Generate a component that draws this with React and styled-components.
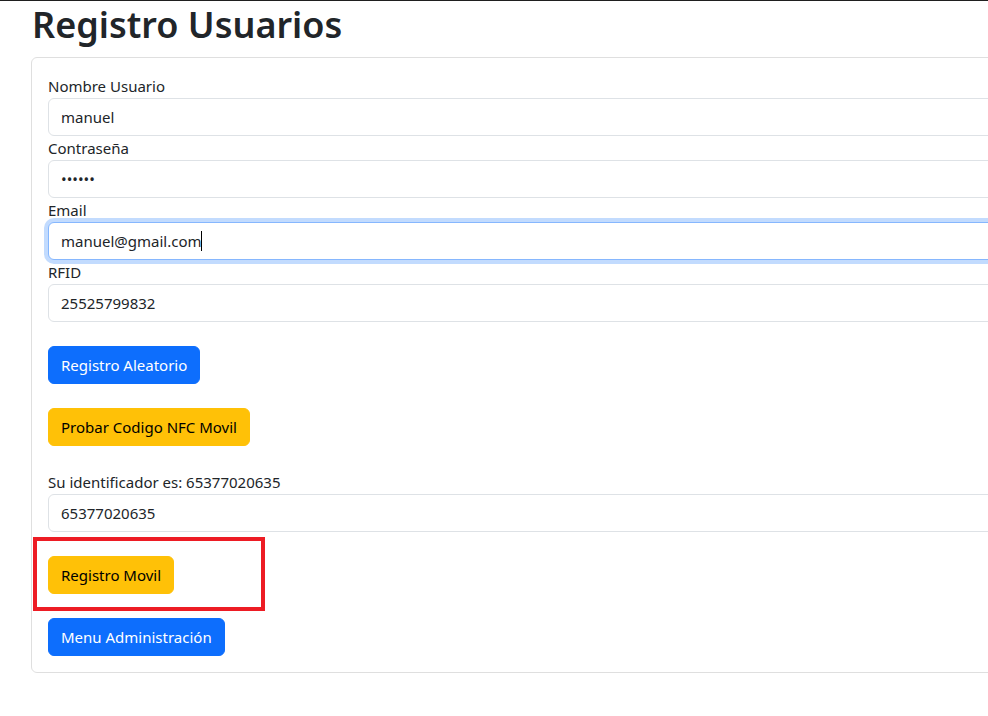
import React from 'react'
import styled, { createGlobalStyle } from 'styled-components'

const GlobalStyle = createGlobalStyle`
  html, body {
    margin: 0;
    padding: 0;
    background: #fff;
    overflow: hidden;
  }
  body {
    border-top: 1px solid #1f1f1f;
    font-family: "Noto Sans", "Open Sans", sans-serif;
    color: #212529;
    font-size: 15px;
    line-height: 24px;
  }
`

const Page = styled.div`
  padding-left: 31px;
  width: 1120px;
`

const Title = styled.h1`
  margin: 0 0 8px 1px;
  font-size: 36px;
  font-weight: 600;
  line-height: 48px;
  color: #212529;
`

const Card = styled.div`
  position: relative;
  border: 1px solid #dfdfdf;
  border-radius: 6px;
  padding: 16px;
  display: flex;
  flex-direction: column;
  align-items: flex-start;
`

const Label = styled.label`
  display: block;
  line-height: 24px;
`

const FieldWrap = styled.div`
  position: relative;
  width: 100%;
`

const Input = styled.input`
  display: block;
  box-sizing: border-box;
  width: 100%;
  height: 38px;
  padding: 6px 12px;
  font-family: inherit;
  font-size: 15px;
  line-height: 24px;
  color: #212529;
  background: #fff;
  border: 1px solid ${p => (p.$focus ? '#86b7fe' : '#dee2e6')};
  border-radius: 6px;
  outline: none;
  box-shadow: ${p => (p.$focus ? '0 0 0 4px rgba(13, 110, 253, 0.25)' : 'none')};
  position: relative;
  z-index: ${p => (p.$focus ? 1 : 0)};
`

const Caret = styled.span`
  position: absolute;
  left: 153px;
  top: 9px;
  width: 1px;
  height: 20px;
  background: #000;
  z-index: 2;
`

const Button = styled.button`
  margin-top: 24px;
  height: 38px;
  padding: 6px 12px;
  font-family: inherit;
  font-size: 15px;
  line-height: 24px;
  border: 1px solid ${p => (p.$variant === 'warning' ? '#ffc107' : '#0d6efd')};
  border-radius: 6px;
  background: ${p => (p.$variant === 'warning' ? '#ffc107' : '#0d6efd')};
  color: ${p => (p.$variant === 'warning' ? '#000' : '#fff')};
  cursor: pointer;
`

const Spacer = styled.div`
  height: 24px;
`

const Highlight = styled.div`
  position: absolute;
  left: 1px;
  top: 479px;
  width: 224px;
  height: 66px;
  border: 4px solid #ed1c24;
  pointer-events: none;
`

const Field = ({ label, value, type = 'text', focus }) => (
  <>
    <Label>{label}</Label>
    <FieldWrap>
      <Input type={type} defaultValue={value} $focus={focus} readOnly />
      {focus && <Caret />}
    </FieldWrap>
  </>
)

export default function App() {
  return (
    <>
      <GlobalStyle />
      <Page>
        <Title>Registro Usuarios</Title>
        <Card>
          <Field label="Nombre Usuario" value="manuel" />
          <Field label="Contraseña" value="manuel" type="password" />
          <Field label="Email" value="manuel@gmail.com" focus />
          <Field label="RFID" value="25525799832" />
          <Button>Registro Aleatorio</Button>
          <Button $variant="warning">Probar Codigo NFC Movil</Button>
          <Spacer />
          <Field label="Su identificador es: 65377020635" value="65377020635" />
          <Button $variant="warning">Registro Movil</Button>
          <Button>Menu Administración</Button>
          <Highlight />
        </Card>
      </Page>
    </>
  )
}
